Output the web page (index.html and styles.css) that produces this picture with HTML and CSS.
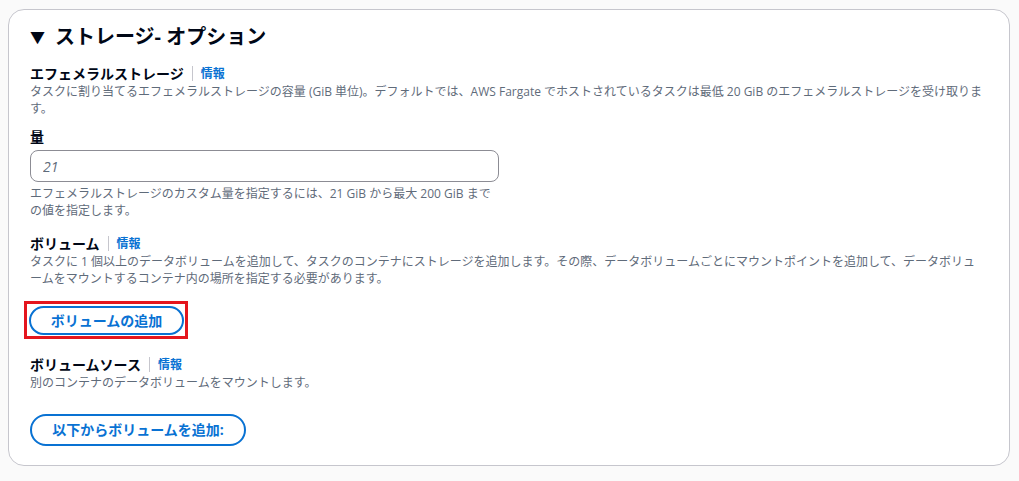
FILE: index.html
```html
<!DOCTYPE html>
<html lang="ja">
<head>
<meta charset="utf-8">
<link rel="stylesheet" href="styles.css">
</head>
<body>
<div class="panel">
  <h2 class="title"><span class="caret">▼</span>ストレージ- オプション</h2>

  <div class="field ephemeral">
    <div class="label-row"><span class="label">エフェメラルストレージ</span><span class="sep"></span><a class="info">情報</a></div>
    <div class="desc">タスクに割り当てるエフェメラルストレージの容量 (GiB 単位)。デフォルトでは、AWS Fargate でホストされているタスクは最低 20 GiB のエフェメラルストレージを受け取ります。</div>
  </div>

  <div class="field amount">
    <div class="label-row"><span class="label">量</span></div>
    <input class="input" type="text" placeholder="21">
    <div class="desc narrow">エフェメラルストレージのカスタム量を指定するには、21 GiB から最大 200 GiB までの値を指定します。</div>
  </div>

  <div class="field volume">
    <div class="label-row"><span class="label">ボリューム</span><span class="sep"></span><a class="info">情報</a></div>
    <div class="desc">タスクに 1 個以上のデータボリュームを追加して、タスクのコンテナにストレージを追加します。その際、データボリュームごとにマウントポイントを追加して、データボリュームをマウントするコンテナ内の場所を指定する必要があります。</div>
  </div>

  <div class="highlight"><button class="btn">ボリュームの追加</button></div>

  <div class="field source">
    <div class="label-row"><span class="label">ボリュームソース</span><span class="sep"></span><a class="info">情報</a></div>
    <div class="desc">別のコンテナのデータボリュームをマウントします。</div>
  </div>

  <button class="btn btn-wide">以下からボリュームを追加:</button>
</div>
</body>
</html>
```

FILE: styles.css
```css
* { box-sizing: border-box; }
html, body { margin: 0; padding: 0; }
body {
  background: #fafafa;
  font-family: "Open Sans", "Noto Sans CJK JP", sans-serif;
  color: #000716;
  padding: 9px 9px 0 8px;
}
.panel {
  background: #fff;
  border: 1px solid #c6c6cd;
  border-radius: 16px;
  padding: 14px 24px 20px 21px;
  height: 457px;
}
.title {
  margin: 0 0 14px;
  font-size: 20px;
  font-weight: 700;
  line-height: 26px;
  display: flex;
  align-items: center;
}
.caret {
  font-size: 15px;
  margin-right: 10px;
}
.field { margin-bottom: 14px; }
.ephemeral { margin-bottom: 10px; }
.amount { margin-bottom: 15px; }
.volume { margin-bottom: 9px; }
.source { margin-bottom: 23px; }
.label-row {
  display: flex;
  align-items: center;
  height: 19px;
}
.label {
  font-size: 14px;
  font-weight: 700;
  line-height: 19px;
}
.sep {
  width: 1px;
  height: 15px;
  background: #c6c6cd;
  margin: 0 8px;
}
.info {
  font-size: 12px;
  font-weight: 700;
  color: #0972d3;
  line-height: 19px;
}
.desc {
  font-size: 12px;
  line-height: 17px;
  color: #5f6b7a;
}
.amount .label-row { margin-bottom: 4px; }
.input {
  display: block;
  width: 469px;
  height: 32px;
  border: 1px solid #8c8c94;
  border-radius: 8px;
  padding: 0 12px;
  font-family: inherit;
  font-size: 14px;
  margin-bottom: 3px;
  outline: none;
}
.input::placeholder {
  color: #5f6b7a;
  font-style: italic;
}
.narrow { width: 470px; }
.highlight {
  display: inline-block;
  border: 3px solid #e4161e;
  padding: 2px 1px 1px 2px;
  margin: 5px 0 16px -6px;
}
.btn {
  display: block;
  background: #fff;
  border: 2px solid #0972d3;
  border-radius: 20px;
  color: #0972d3;
  font-family: inherit;
  font-size: 14px;
  font-weight: 700;
  height: 30px;
  padding: 0 19px;
  line-height: 26px;
}
.highlight .btn { width: 155px; height: 29px; line-height: 25px; }
.btn-wide { height: 32px; width: 216px; }
```
